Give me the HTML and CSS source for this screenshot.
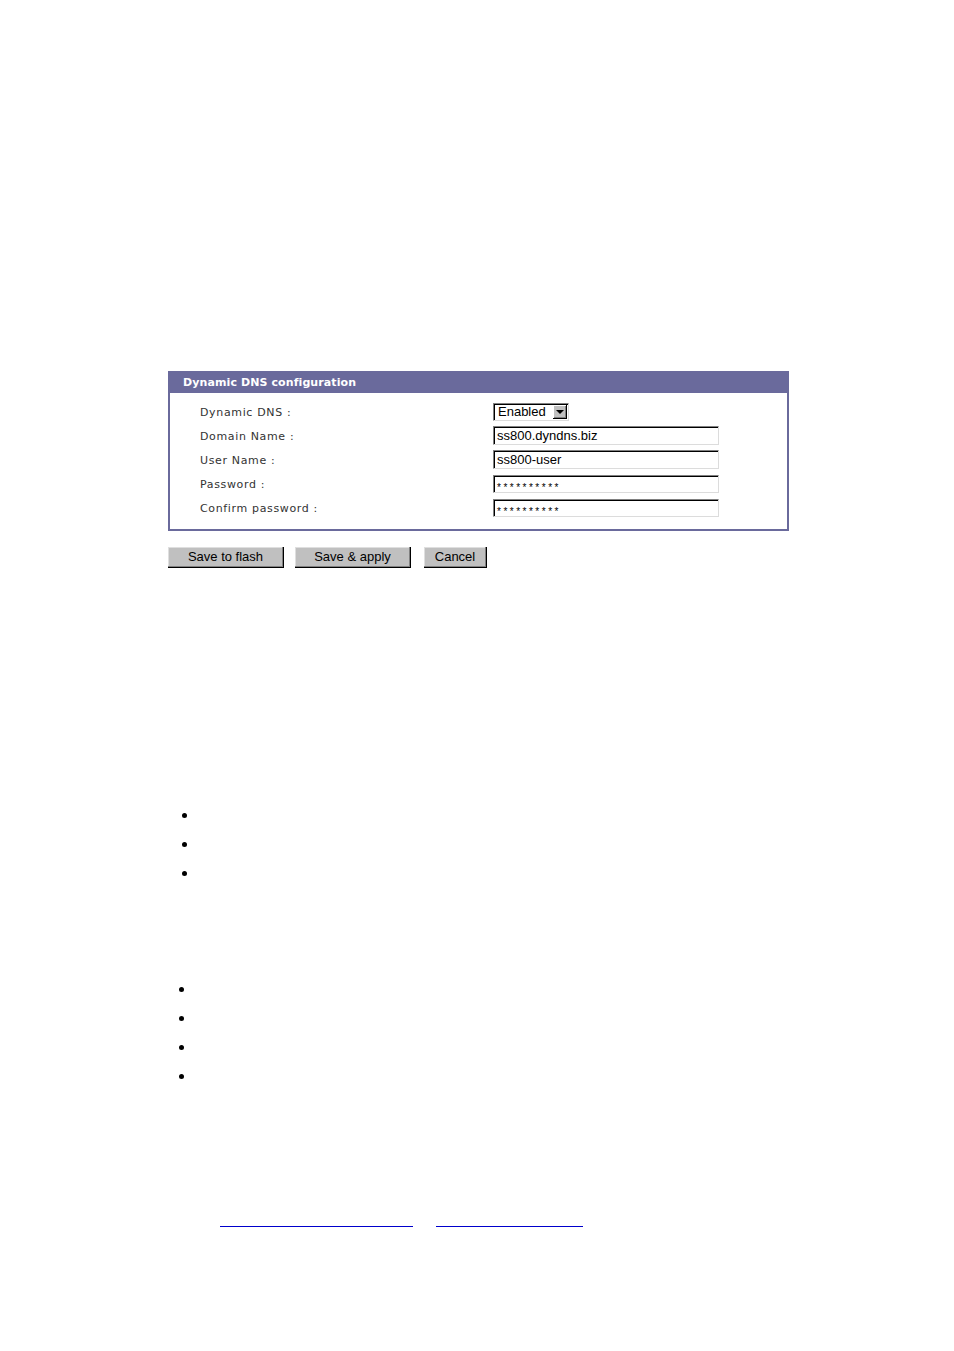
FILE: index.html
```html
<!DOCTYPE html>
<html>
<head>
<meta charset="utf-8">
<title>Dynamic DNS configuration</title>
<link rel="stylesheet" href="styles.css">
</head>
<body>
<div class="page">
  <div class="panel">
    <div class="panel-head">Dynamic DNS configuration</div>
    <div class="panel-body">
      <div class="row"><span class="label">Dynamic DNS :</span>
        <div class="select"><span class="select-text">Enabled</span><span class="select-btn"><span class="tri"></span></span></div>
      </div>
      <div class="row"><span class="label">Domain Name :</span><div class="input">ss800.dyndns.biz</div></div>
      <div class="row"><span class="label">User Name :</span><div class="input">ss800-user</div></div>
      <div class="row"><span class="label">Password :</span><div class="input pw">**********</div></div>
      <div class="row"><span class="label">Confirm password :</span><div class="input pw">**********</div></div>
    </div>
  </div>
  <div class="buttons">
    <button class="btn btn-wide">Save to flash</button>
    <button class="btn btn-wide">Save &amp; apply</button>
    <button class="btn btn-small">Cancel</button>
  </div>
  <ul class="list list-a">
    <li><span class="dot"></span></li>
    <li><span class="dot"></span></li>
    <li><span class="dot"></span></li>
  </ul>
  <ul class="list list-b">
    <li><span class="dot"></span></li>
    <li><span class="dot"></span></li>
    <li><span class="dot"></span></li>
    <li><span class="dot"></span></li>
  </ul>
  <div class="links">
    <a class="link link-a" href="#">&nbsp;</a>
    <a class="link link-b" href="#">&nbsp;</a>
  </div>
</div>
</body>
</html>
```
FILE: styles.css
```css
html, body {
  margin: 0;
  padding: 0;
  background: #ffffff;
}
.page {
  padding: 371px 0 0 168px;
  font-family: "DejaVu Sans", Verdana, sans-serif;
}
.panel {
  width: 621px;
  box-sizing: border-box;
  border: 2px solid #6a6a9c;
  border-top: 0;
}
.panel-head {
  height: 22px;
  box-sizing: border-box;
  margin: 0 -2px;
  background: #6a6a9c;
  color: #ffffff;
  font-weight: bold;
  font-size: 11px;
  line-height: 21px;
  padding: 1px 0 0 15px;
  letter-spacing: 0.1px;
}
.panel-body {
  padding: 7px 0 9px 30px;
}
.row {
  display: grid;
  grid-template-columns: 293px auto;
  align-items: center;
  height: 24px;
}
.label {
  font-size: 11px;
  color: #333333;
  letter-spacing: 0.65px;
}
.input {
  width: 226px;
  height: 19px;
  box-sizing: border-box;
  margin-top: -2px;
  border-top: 1px solid #808080;
  border-left: 1px solid #808080;
  border-right: 1px solid #dcdcdc;
  border-bottom: 1px solid #dcdcdc;
  box-shadow: inset 1px 1px 0 #000000;
  font-family: "Liberation Sans", Arial, sans-serif;
  font-size: 13px;
  line-height: 17px;
  padding-left: 3px;
  color: #000000;
}
.input.pw {
  font-size: 10px;
  letter-spacing: 2.5px;
  line-height: 17px;
  padding-top: 3px;
  margin-top: 0;
  height: 18px;
}
.select {
  width: 76px;
  height: 18px;
  box-sizing: border-box;
  display: flex;
  align-items: stretch;
  border-top: 1px solid #808080;
  border-left: 1px solid #808080;
  border-right: 1px solid #dcdcdc;
  border-bottom: 1px solid #dcdcdc;
  box-shadow: inset 1px 1px 0 #000000;
  font-family: "Liberation Sans", Arial, sans-serif;
  font-size: 13px;
  line-height: 16px;
}
.select-text {
  flex: 1;
  padding-left: 4px;
}
.select-btn {
  width: 14px;
  margin: 1px 1px 1px 0;
  background: #c0c0c0;
  box-sizing: border-box;
  border-right: 1px solid #000000;
  border-bottom: 1px solid #000000;
  box-shadow: inset 1px 1px 0 #ffffff, inset -1px -1px 0 #808080;
  display: flex;
  align-items: center;
  justify-content: center;
}
.tri {
  width: 0;
  height: 0;
  border-left: 4px solid transparent;
  border-right: 4px solid transparent;
  border-top: 4px solid #000000;
  margin-top: 1px;
}
.buttons {
  display: flex;
  margin-top: 16px;
  height: 21px;
}
.btn {
  height: 21px;
  box-sizing: border-box;
  background: #c0c0c0;
  border: 0;
  border-right: 1px solid #000000;
  border-bottom: 1px solid #000000;
  box-shadow: inset -1px -1px 0 #808080, inset 1px 1px 0 #dfdfdf;
  font-family: "Liberation Sans", Arial, sans-serif;
  font-size: 13px;
  color: #000000;
  padding: 0 0 1px 0;
  margin: 0;
}
.btn-wide {
  width: 116px;
  margin-right: 11px;
}
.btn-wide + .btn-wide {
  margin-right: 13px;
}
.btn-small {
  width: 63px;
}
.list {
  list-style: none;
  margin: 0;
  padding: 0;
}
.list li {
  height: 29px;
  display: flex;
  align-items: center;
}
.list-a {
  margin-top: 233px;
  padding-left: 14px;
}
.list-b {
  margin-top: 87px;
  padding-left: 11px;
}
.dot {
  width: 5px;
  height: 5px;
  border-radius: 50%;
  background: #000000;
}
.links {
  margin-top: 121px;
  padding-left: 52px;
  display: flex;
  gap: 23px;
}
.link {
  display: block;
  height: 14px;
  border-bottom: 1px solid #0000cc;
  text-decoration: none;
  color: #0000cc;
  font-family: "Liberation Sans", Arial, sans-serif;
  font-size: 12px;
}
.link-a { width: 193px; }
.link-b { width: 147px; }
```
